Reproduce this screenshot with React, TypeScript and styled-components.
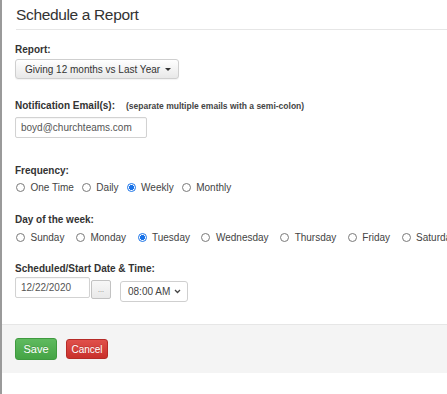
import React from "react";
import styled, { createGlobalStyle } from "styled-components";

const Global = createGlobalStyle`
  html, body { margin: 0; padding: 0; background: #fff; }
  body { font-family: "Liberation Sans", Arial, sans-serif; color: #333; }
`;

const Page = styled.div`
  min-height: 394px;
  border-left: 2px solid #9a9a9a;
  display: flex;
  flex-direction: column;
  overflow: hidden;
`;

const Main = styled.div`
  padding-left: 13px;
  display: flex;
  flex-direction: column;
`;

const Header = styled.div`
  margin-left: 1px;
  border-bottom: 1px solid #e6e6e6;
  padding-top: 6px;
  padding-bottom: 5px;
`;

const Title = styled.h1`
  margin: 0;
  font-size: 15.5px;
  letter-spacing: -0.35px;
  font-weight: normal;
  line-height: 18px;
  color: #333;
`;

const Section = styled.div<{ $top: number }>`
  margin-top: ${(p) => p.$top}px;
  display: flex;
  flex-direction: column;
  align-items: flex-start;
`;

const Label = styled.div<{ $gap: number }>`
  font-size: 10px;
  font-weight: bold;
  line-height: 12px;
  color: #333;
  margin-bottom: ${(p) => p.$gap}px;
  white-space: nowrap;
`;

const Hint = styled.span`
  font-size: 8.5px;
  margin-left: 11px;
  color: #444;
`;

const DropButton = styled.button`
  height: 20px;
  width: 164px;
  padding: 0 0 0 9px;
  display: flex;
  align-items: center;
  gap: 5px;
  font-family: inherit;
  font-size: 10px;
  color: #333;
  background: linear-gradient(#ffffff, #e8e8e8);
  border: 1px solid #cfcfcf;
  border-radius: 3px;
  box-shadow: 0 1px 1px rgba(0, 0, 0, 0.05);
`;

const Caret = styled.span`
  width: 0;
  height: 0;
  border-left: 3px solid transparent;
  border-right: 3px solid transparent;
  border-top: 3px solid #333;
`;

const TextInput = styled.div<{ $w: number }>`
  box-sizing: border-box;
  width: ${(p) => p.$w}px;
  height: 21px;
  padding: 0 5px;
  display: flex;
  align-items: center;
  font-size: 10px;
  color: #555;
  border: 1px solid #d2d2d2;
  border-radius: 2px;
  background: #fff;
  box-shadow: inset 0 1px 1px rgba(0, 0, 0, 0.04);
`;

const RadioRow = styled.div<{ $gap: number }>`
  display: flex;
  align-items: center;
  gap: ${(p) => p.$gap}px;
  height: 12px;
  white-space: nowrap;
`;

const RadioItem = styled.label`
  display: flex;
  align-items: center;
  gap: 5.5px;
  font-size: 10px;
  color: #444;
  margin-left: 1px;
`;

const Radio = styled.span<{ $on?: boolean }>`
  box-sizing: border-box;
  width: 9px;
  height: 9px;
  border-radius: 50%;
  border: 1px solid ${(p) => (p.$on ? "#1a73e8" : "#7a7a7a")};
  background: ${(p) =>
    p.$on ? "radial-gradient(circle, #1a73e8 0 2.3px, #fff 2.6px)" : "#fff"};
`;

const DateRow = styled.div`
  display: flex;
  align-items: flex-start;
`;

const DotsButton = styled.div`
  box-sizing: border-box;
  margin: 3px 0 0 1px;
  width: 20px;
  height: 19px;
  display: flex;
  align-items: center;
  justify-content: center;
  font-size: 7px;
  color: #777;
  background: linear-gradient(#f7f7f7, #e9e9e9);
  border: 1px solid #c2c2c2;
  border-radius: 2px;
`;

const Select = styled.div`
  box-sizing: border-box;
  margin: 4px 0 0 9px;
  width: 68px;
  height: 21px;
  padding: 0 6px 0 7px;
  display: flex;
  align-items: center;
  justify-content: space-between;
  font-size: 10px;
  color: #444;
  border: 1px solid #cfcfcf;
  border-radius: 3px;
  background: #fff;
`;

const Footer = styled.div`
  margin-top: 22px;
  height: 49px;
  box-sizing: border-box;
  padding: 0 0 0 13px;
  border-top: 1px solid #e6e6e6;
  background: #f4f4f4;
  display: flex;
  align-items: center;
  gap: 9px;
`;

const Btn = styled.button<{ $kind: "save" | "cancel" }>`
  box-sizing: border-box;
  width: 42px;
  height: ${(p) => (p.$kind === "save" ? 22 : 20)}px;
  padding: 0;
  font-family: inherit;
  font-size: ${(p) => (p.$kind === "save" ? 11 : 10)}px;
  color: #fff;
  border-radius: 3px;
  border: 1px solid ${(p) => (p.$kind === "save" ? "#3f9a3f" : "#b52b27")};
  background: ${(p) =>
    p.$kind === "save"
      ? "linear-gradient(#5fba5f, #45a445)"
      : "linear-gradient(#e0504b, #c9302c)"};
  text-shadow: 0 -1px 0 rgba(0, 0, 0, 0.15);
`;

const freq = ["One Time", "Daily", "Weekly", "Monthly"];
const days = ["Sunday", "Monday", "Tuesday", "Wednesday", "Thursday", "Friday", "Saturday"];

export default function App() {
  return (
    <>
      <Global />
      <Page>
        <Main>
          <Header>
            <Title>Schedule a Report</Title>
          </Header>

          <Section $top={14}>
            <Label $gap={3}>Report:</Label>
            <DropButton>
              Giving 12 months vs Last Year <Caret />
            </DropButton>
          </Section>

          <Section $top={21}>
            <Label $gap={5}>
              Notification Email(s):<Hint>(separate multiple emails with a semi-colon)</Hint>
            </Label>
            <TextInput $w={132}>boyd@churchteams.com</TextInput>
          </Section>

          <Section $top={27}>
            <Label $gap={4}>Frequency:</Label>
            <RadioRow $gap={7}>
              {freq.map((f) => (
                <RadioItem key={f}>
                  <Radio $on={f === "Weekly"} />
                  {f}
                </RadioItem>
              ))}
            </RadioRow>
          </Section>

          <Section $top={21}>
            <Label $gap={5}>Day of the week:</Label>
            <RadioRow $gap={10.5}>
              {days.map((d) => (
                <RadioItem key={d}>
                  <Radio $on={d === "Tuesday"} />
                  {d}
                </RadioItem>
              ))}
            </RadioRow>
          </Section>

          <Section $top={20}>
            <Label $gap={2}>Scheduled/Start Date &amp; Time:</Label>
            <DateRow>
              <TextInput $w={75}>12/22/2020</TextInput>
              <DotsButton>...</DotsButton>
              <Select>
                08:00 AM
                <svg width="7" height="5" viewBox="0 0 7 5">
                  <path d="M1 1l2.5 2.5L6 1" fill="none" stroke="#444" strokeWidth="1.3" />
                </svg>
              </Select>
            </DateRow>
          </Section>
        </Main>
        <Footer>
          <Btn $kind="save">Save</Btn>
          <Btn $kind="cancel">Cancel</Btn>
        </Footer>
      </Page>
    </>
  );
}
